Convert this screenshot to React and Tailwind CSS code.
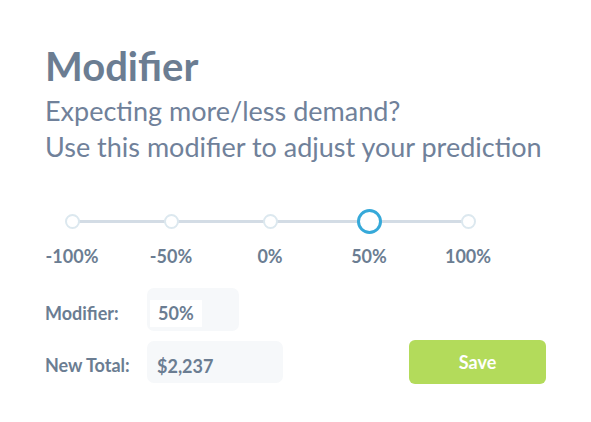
import React from 'react';

const STEPS = [
  { label: '-100%', active: false },
  { label: '-50%', active: false },
  { label: '0%', active: false },
  { label: '50%', active: true },
  { label: '100%', active: false },
];

export default function App() {
  return (
    <div className="w-[591px] h-[422px] bg-white text-[#6b7d92] pl-[45px] pr-[45px] pt-[42px] font-['Lato','Open_Sans',sans-serif]">
      {/* Header */}
      <h1 className="text-[40px] leading-[48px] font-bold">Modifier</h1>
      <p className="mt-[3px] text-[27px] leading-[36px] text-[#70819a]">
        Expecting more/less demand?
        <br />
        Use this modifier to adjust your prediction
      </p>

      {/* Slider */}
      <div className="relative mt-[44px] w-[456px] ml-[-3px]">
        <div className="absolute left-[30px] right-[30px] top-[11px] h-[3px] bg-[#d3dce5]" />
        <div className="relative flex justify-between">
          {STEPS.map((s) => (
            <div key={s.label} className="w-[60px] flex flex-col items-center">
              <div className="h-[25px] flex items-center justify-center">
                {s.active ? (
                  <div className="w-[25px] h-[25px] rounded-full bg-white border-[3px] border-[#36a9d9]" />
                ) : (
                  <div className="w-[15px] h-[15px] rounded-full bg-white border-2 border-[#dce8ef]" />
                )}
              </div>
              <span className="mt-[12px] text-[18px] leading-[20px] font-bold whitespace-nowrap">{s.label}</span>
            </div>
          ))}
        </div>
      </div>

      {/* Form */}
      <div className="mt-[22px] flex flex-col gap-[9px]">
        <div className="flex items-center">
          <span className="w-[102px] pt-[6px] text-[18px] leading-[22px] font-bold">Modifier:</span>
          <div className="w-[92px] h-[43px] rounded-[7px] bg-[#f6f8fa] pt-[12px] pl-[3px]">
            <div className="w-[52px] h-[27px] bg-white pl-[8px] text-[18px] leading-[26px] font-bold">50%</div>
          </div>
        </div>
        <div className="flex items-center">
          <span className="w-[102px] pt-[6px] text-[18px] leading-[22px] font-bold">New Total:</span>
          <div className="w-[136px] h-[42px] rounded-[7px] bg-[#f6f8fa] pl-[10px] pt-[7px] flex items-center text-[18px] leading-[20px] font-bold">
            $2,237
          </div>
          <button className="ml-auto w-[137px] h-[44px] rounded-[6px] bg-[#b3db5b] text-white text-[18px] font-bold">
            Save
          </button>
        </div>
      </div>
    </div>
  );
}
